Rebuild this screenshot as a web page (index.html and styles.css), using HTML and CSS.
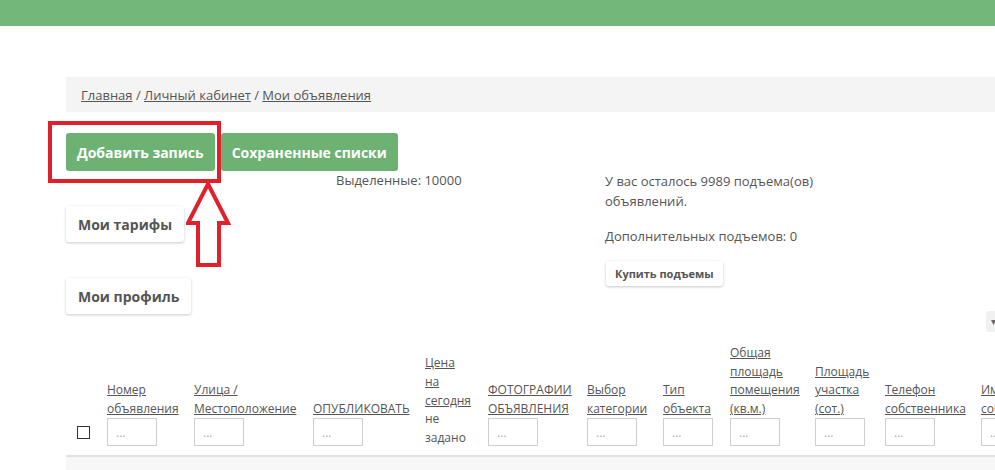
FILE: index.html
```html
<!DOCTYPE html>
<html lang="ru">
<head>
<meta charset="utf-8">
<title>Мои объявления</title>
<link rel="stylesheet" href="styles.css">
</head>
<body>
<div class="topbar"></div>
<main class="page">
  <nav class="crumbs"><a href="#">Главная</a> / <a href="#">Личный кабинет</a> / <a href="#">Мои объявления</a></nav>
  <div class="actions">
    <button class="btn btn-green">Добавить запись</button>
    <button class="btn btn-green">Сохраненные списки</button>
  </div>
  <div class="panel">
    <div class="col-left">
      <button class="btn btn-white">Мои тарифы</button>
      <button class="btn btn-white">Мои профиль</button>
    </div>
    <div class="col-mid">Выделенные: 10000</div>
    <div class="col-right">
      <p>У вас осталось 9989 подъема(ов)<br>объявлений.</p>
      <p>Дополнительных подъемов: 0</p>
      <button class="btn btn-white btn-small">Купить подъемы</button>
    </div>
  </div>
  <div class="toolbar"><span class="dd">&#9662;</span></div>
  <table class="grid">
    <colgroup>
      <col class="w-cb"><col class="w-num"><col class="w-street"><col class="w-pub"><col class="w-price"><col class="w-photo"><col class="w-cat"><col class="w-type"><col class="w-area"><col class="w-plot"><col class="w-phone"><col class="w-name">
    </colgroup>
    <thead>
      <tr>
        <th class="cb-cell"><input type="checkbox" class="cb"></th>
        <th><a href="#">Номер<br>объявления</a><input class="flt" placeholder="..."></th>
        <th><a href="#">Улица /<br>Местоположение</a><input class="flt" placeholder="..."></th>
        <th><a href="#">ОПУБЛИКОВАТЬ</a><input class="flt" placeholder="..."></th>
        <th><a href="#">Цена<br>на<br>сегодня</a><br>не<br>задано</th>
        <th><a href="#">ФОТОГРАФИИ<br>ОБЪЯВЛЕНИЯ</a><input class="flt" placeholder="..."></th>
        <th><a href="#">Выбор<br>категории</a><input class="flt" placeholder="..."></th>
        <th><a href="#">Тип<br>объекта</a><input class="flt" placeholder="..."></th>
        <th><a href="#">Общая<br>площадь<br>помещения<br>(кв.м.)</a><input class="flt" placeholder="..."></th>
        <th><a href="#">Площадь<br>участка<br>(сот.)</a><input class="flt" placeholder="..."></th>
        <th><a href="#">Телефон<br>собственника</a><input class="flt" placeholder="..."></th>
        <th><a href="#">Имя<br>собственника</a><input class="flt" placeholder="..."></th>
      </tr>
    </thead>
    <tbody>
      <tr><td></td><td></td><td></td><td></td><td></td><td></td><td></td><td></td><td></td><td></td><td></td><td></td></tr>
    </tbody>
  </table>
</main>
<div class="mark-box"></div>
<svg class="mark-arrow" width="48" height="90" viewBox="0 0 48 90">
  <path d="M22 3 L42 42 L33 42 L33 84 L12 84 L12 42 L2 42 Z" fill="none" stroke="#e0202b" stroke-width="4" stroke-linejoin="miter"/>
</svg>
</body>
</html>
```
FILE: styles.css
```css
html, body {
  margin: 0;
  padding: 0;
}
body {
  position: relative;
  width: 995px;
  height: 470px;
  overflow: hidden;
  background: #fff;
  font-family: "Open Sans", "Liberation Sans", Arial, sans-serif;
  font-size: 13px;
  color: #555;
}
.topbar {
  height: 26px;
  background: #74b77a;
}
.page {
  margin-left: 66px;
  width: 944px;
}
.crumbs {
  margin-top: 51px;
  height: 35px;
  line-height: 36px;
  padding-left: 15px;
  background: #f4f4f4;
  width: 1000px;
  color: #555;
}
.crumbs a {
  color: #555;
  text-decoration: underline;
}
.actions {
  margin-top: 21px;
  display: flex;
  gap: 6px;
}
.btn {
  font-family: "Open Sans", "Liberation Sans", Arial, sans-serif;
  font-weight: 700;
  font-size: 14px;
  border: 0;
  border-radius: 3px;
  padding: 0 12px;
  cursor: pointer;
}
.btn-green {
  height: 38px;
  background: #6db272;
  color: #fff;
  padding: 0 11px;
}
.btn-white {
  height: 36px;
  background: #fff;
  color: #555;
  box-shadow: 0 1px 3px rgba(0, 0, 0, 0.22);
}
.btn-small {
  height: 25px;
  font-size: 11px;
  padding: 0 9px;
  margin-left: 1px;
}
.panel {
  display: flex;
}
.col-left {
  width: 270px;
  flex: none;
  display: flex;
  flex-direction: column;
  align-items: flex-start;
  gap: 36px;
  padding-top: 35px;
}
.col-mid {
  width: 269px;
  flex: none;
  line-height: 19px;
}
.col-right {
  flex: 1;
  line-height: 20px;
}
.col-right p {
  margin: 0 0 15px;
}
.toolbar {
  margin-top: -3px;
  height: 21px;
  display: flex;
  justify-content: flex-end;
}
.dd {
  width: 24px;
  height: 21px;
  background: #f1f1f1;
  border-radius: 3px;
  font-size: 10px;
  line-height: 21px;
  color: #666;
  padding-left: 5px;
  box-sizing: border-box;
}
.grid {
  margin-top: 4px;
  border-collapse: collapse;
  table-layout: fixed;
  width: 1007px;
}
.w-cb { width: 33px; }
.w-num { width: 87px; }
.w-street { width: 119px; }
.w-pub { width: 112px; }
.w-price { width: 63px; }
.w-photo { width: 99px; }
.w-cat { width: 76px; }
.w-type { width: 67px; }
.w-area { width: 85px; }
.w-plot { width: 70px; }
.w-phone { width: 96px; }
.w-name { width: 100px; }
.grid th {
  padding: 8px;
  vertical-align: bottom;
  text-align: left;
  font-weight: 400;
  font-size: 12px;
  line-height: 18.6px;
  white-space: nowrap;
  color: #555;
  border-bottom: 2px solid #e2e2e2;
}
.grid th a {
  color: #555;
  text-decoration: underline;
}
.grid th.cb-cell {
  padding-left: 11px;
  padding-right: 0;
}
.cb {
  appearance: none;
  -webkit-appearance: none;
  display: block;
  width: 13px;
  height: 13px;
  margin: 0 0 8px;
  border: 1px solid #333;
  border-radius: 0;
  background: #fff;
  box-sizing: border-box;
}
.flt {
  display: block;
  width: 50px;
  height: 28px;
  box-sizing: border-box;
  border: 1px solid #cfcfcf;
  padding: 0 8px;
  margin: 0 0 1px;
  font-family: "Open Sans", "Liberation Sans", Arial, sans-serif;
  font-size: 12px;
  color: #555;
}
.flt::placeholder {
  color: #aaa;
}
.grid td {
  height: 30px;
  background: #f7f7f7;
  border-top: 1px solid #fff;
}
.mark-box {
  position: absolute;
  left: 48px;
  top: 121px;
  width: 165px;
  height: 54px;
  border: 4px solid #e0202b;
}
.mark-arrow {
  position: absolute;
  left: 186px;
  top: 181px;
}
```
